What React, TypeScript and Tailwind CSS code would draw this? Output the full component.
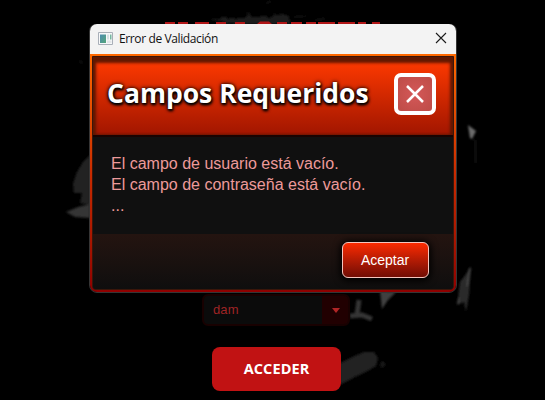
import React from "react";

function Smudges() {
  return (
    <svg className="absolute inset-0" width="545" height="400" viewBox="0 0 545 400" aria-hidden="true">
      <defs>
        <filter id="soft" x="-20%" y="-20%" width="140%" height="140%">
          <feGaussianBlur stdDeviation="1.3" />
        </filter>
        <filter id="dust" x="-10%" y="-20%" width="120%" height="140%">
          <feTurbulence type="fractalNoise" baseFrequency="0.2" numOctaves="3" seed="4" result="n" />
          <feDisplacementMap in="SourceGraphic" in2="n" scale="4" xChannelSelector="R" yChannelSelector="G" />
          <feGaussianBlur stdDeviation="1" />
        </filter>
      </defs>
      <g filter="url(#dust)">
        <path d="M209 19L225 18L244 18L249 13L252 18L262 15L270 18L275 14L288 15L291 24H232Z" fill="#1e1e1e" />
        <path d="M292 17L306 16M315 20L326 19M267 3L271 1" stroke="#191919" strokeWidth="1.5" />
      </g>
      <g filter="url(#soft)">
        <path d="M90 155L83 162L77 172L73 184L74 193L82 193L80 203L90 205Z" fill="#232323" />
        <path d="M66 212L78 207L90 204V218L75 217Z" fill="#343434" />
        <path d="M78 62L81 61L83 63Z" fill="#252525" />
        <path d="M468 125L476 131L472 139L470 138Z" fill="#6c6c6c" />
        <path d="M475 140L476 163M468 151L469 152" stroke="#131313" strokeWidth="2" />
        <path d="M470 267L471 268L469 295L466 312L464 302L457 305L460 282L466 274Z" fill="#292929" />
        <path d="M470 268L467 286M459 298L458 304" stroke="#4b4b4b" strokeWidth="1.5" />
        <path d="M380 291L396 292L388 300L382 309Z" fill="#404040" />
        <path d="M359 300L357 315M350 316L362 315L372 319" fill="none" stroke="#353535" strokeWidth="5" />
        <path d="M340 363L352 357L364 352L374 352L378 358L376 366L366 372L355 377L340 385Z" fill="#242424" />
        <path d="M382 360L386 364L382 369L380 365Z" fill="#171717" />
      </g>
      <path
        d="M165 22h10v2h-10zM178 22h10v2h-10zM195 22h14v2h-14zM216 22h10v2h-10zM235 22h10v2h-10zM257 24l3-2.6h9l3 2.6zM277 22h10v2h-10zM291 22h11v2h-11zM306 22h10v2h-10zM318 22h17v2h-17zM338 22h17v2h-17zM358 22h8v2h-8zM372 22h8v2h-8z"
        fill="#b11617"
      />
    </svg>
  );
}

function LoginForm() {
  return (
    <div className="relative flex flex-col pl-[202px] pt-[294px]">
      <div className="flex h-8 w-[148px] overflow-hidden rounded-[6px] border-2 border-[#180101] bg-[#0b0b0b]">
        <span className="flex-1 pl-[9px] text-[13px] leading-[28px] tracking-[0.1px] text-[#9f2425]">dam</span>
        <span className="flex w-[26px] items-center justify-center bg-[#210001]">
          <svg width="8" height="5" viewBox="0 0 8 5" className="ml-[2px]">
            <path d="M0 0h8L4 5z" fill="#b12526" />
          </svg>
        </span>
      </div>
      <button className="ml-[10px] mt-[21px] h-11 w-[129px] rounded-[8px] bg-[#c11213] font-['Open_Sans','Noto_Sans',sans-serif] text-[14.5px] font-bold tracking-[0.1px] text-white">
        ACCEDER
      </button>
    </div>
  );
}

function TitleBar() {
  return (
    <div className="flex h-[30px] items-center bg-[#f3f3f3] pl-2 pr-[9px]">
      <svg width="15" height="13" viewBox="0 0 15 13" className="mr-[6px] mb-[2px]">
        <defs>
          <linearGradient id="app" x1="0" y1="0" x2="1" y2="1">
            <stop stopColor="#4b8caf" />
            <stop offset="1" stopColor="#55a57a" />
          </linearGradient>
        </defs>
        <path d="M.5.5h14v12H.5z" fill="#f7f8f9" stroke="#a9afb8" />
        <path d="M2 2.5h6v8.5H2z" fill="url(#app)" />
        <path d="M9 2.5h2v5H9z" fill="#d5e1e3" />
        <path d="M12 2.5h1.5v5H12z" fill="#77b6a0" />
        <path d="M9 8.5h4.5V11H9z" fill="#e3e6e9" />
      </svg>
      <span className="flex-1 font-['Open_Sans','Noto_Sans',sans-serif] text-[12px] leading-[30px] tracking-[-0.38px] text-[#111]">
        Error de Validación
      </span>
      <svg width="12" height="12" viewBox="0 0 12 12" className="mb-[2px]">
        <path d="M1 1l10 10M11 1L1 11" stroke="#1b1b1b" strokeWidth="1.1" />
      </svg>
    </div>
  );
}

function Dialog() {
  return (
    <div className="absolute left-[90px] top-6 flex w-[366px] flex-col overflow-hidden rounded-[7px] shadow-[0_1px_0_0_#353535,1px_0_0_0_#353535,-1px_0_0_0_#353535]">
      <TitleBar />
      <div className="h-[238px] rounded-b-[6px] bg-linear-to-b from-[#ff6900] via-[#c92b00] to-[#8f0000] p-[2px]">
        <div className="flex h-full flex-col overflow-hidden rounded-b-[4px] border border-[#3a160a] bg-[#101010]">
          <header className="flex h-[80px] shrink-0 items-center justify-between border-b-2 border-[#180302] bg-linear-to-b from-[#fb3800] from-[8%] to-[#a11500] pl-[14px] pr-[17px] shadow-[inset_0_6px_3px_#601800,inset_3px_0_3px_#601800,inset_-3px_0_3px_#601800]">
            <h1 className="mb-[6px] whitespace-nowrap font-['Open_Sans','Noto_Sans',sans-serif] text-[26.5px] leading-[36px] font-bold tracking-[0px] text-white [text-shadow:1px_2px_3px_#000,0_1px_3px_#000,0_0_4px_#000]">
              Campos Requeridos
            </h1>
            <button className="mb-[5px] flex size-[42px] items-center justify-center rounded-[7px] border-4 border-white bg-radial from-[#d45858] to-[#bd4c47]">
              <svg width="18" height="18" viewBox="0 0 18 18">
                <path d="M1 1l16 16M17 1L1 17" stroke="#fff" strokeWidth="2.5" />
              </svg>
            </button>
          </header>
          <div className="h-[97px] shrink-0 whitespace-nowrap pl-[18px] pt-[16px] text-[16px] leading-[21px] text-[#ed9a9a]">
            <p>El campo de usuario está vacío.</p>
            <p>El campo de contraseña está vacío.</p>
            <p>...</p>
          </div>
          <footer className="flex flex-1 items-start justify-end bg-linear-to-b from-[#241410] to-[#0f0e0e] pr-[24px] pt-[8px]">
            <button className="h-9 w-[87px] rounded-[6px] border border-[#f5c5be] bg-linear-to-b from-[#fc2b00] to-[#720d04] pr-[1px] text-[14px] text-white shadow-[0_1px_7px_2px_#000]">
              Aceptar
            </button>
          </footer>
        </div>
      </div>
    </div>
  );
}

export default function App() {
  return (
    <main className="relative h-[400px] w-[545px] overflow-hidden bg-black font-['Liberation_Sans',Arial,sans-serif]">
      <Smudges />
      <LoginForm />
      <Dialog />
    </main>
  );
}
